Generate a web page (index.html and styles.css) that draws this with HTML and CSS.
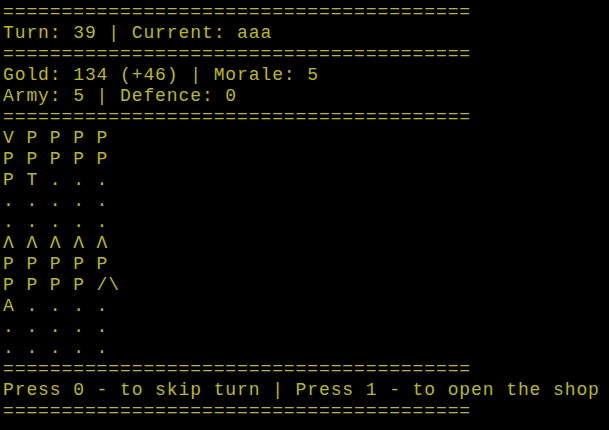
FILE: index.html
```html
<!DOCTYPE html>
<html>
<head>
<meta charset="utf-8">
<link rel="stylesheet" href="styles.css">
</head>
<body>
<pre class="console">========================================
Turn: 39 | Current: aaa
========================================
Gold: 134 (+46) | Morale: 5
Army: 5 | Defence: 0
========================================
V P P P P
P P P P P
P T . . .
. . . . .
. . . . .
Λ Λ Λ Λ Λ
P P P P P
P P P P /\
A . . . .
. . . . .
. . . . .
========================================
Press 0 - to skip turn | Press 1 - to open the shop
========================================</pre>
</body>
</html>
```
FILE: styles.css
```css
html, body {
  margin: 0;
  padding: 0;
  background: #000;
  width: 609px;
  height: 430px;
  overflow: hidden;
}
.console {
  margin: 0;
  padding: 2px 0 0 3px;
  font-family: "Liberation Mono", "DejaVu Sans Mono", monospace;
  font-size: 18px;
  letter-spacing: 0.9px;
  line-height: 21px;
  color: #bcbc00;
  white-space: pre;
}
```
